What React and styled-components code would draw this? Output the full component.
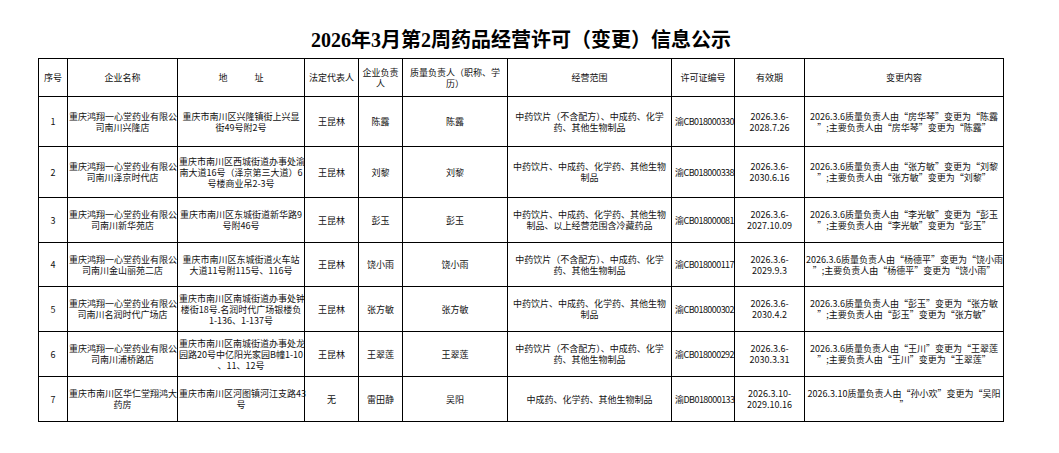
import * as React from 'react'
import styled, { createGlobalStyle } from 'styled-components'

const GlobalStyle = createGlobalStyle`
	body {
		margin: 0;
		background: #fff;
	}
`

const Page = styled.div`
	width: 966px;
	padding-left: 38px;
	font-family: "Noto Sans CJK SC", sans-serif;
	color: #111;
`

const Title = styled.h1`
	margin: 0;
	height: 58px;
	box-sizing: border-box;
	padding-top: 27px;
	font-family: "Liberation Serif", "Noto Sans CJK SC", serif;
	font-size: 20px;
	line-height: 26px;
	font-weight: bold;
	text-align: center;
	color: #000;
`

const Table = styled.table`
	width: 966px;
	border-collapse: collapse;
	table-layout: fixed;
	font-size: 9px;
	line-height: 11px;
`

const Row = styled.tr`
	height: ${(p) => p.$h}px;
`

const Cell = styled.td`
	border: 1px solid #000;
	padding: 0 1px;
	vertical-align: middle;
	text-align: center;
	white-space: nowrap;
	font-weight: normal;
`

const LicenseCell = styled(Cell)`
	text-align: left;
	padding-left: 3px;
	letter-spacing: -0.55px;
	overflow: hidden;
`

const HeadCell = styled(Cell).attrs({ as: 'th' })``

const widths = [29, 110, 127, 54, 44, 105, 164, 63, 70, 199]

const head = [
	['序号'],
	['企业名称'],
	['地　　　址'],
	['法定代表人'],
	['企业负责', '人'],
	['质量负责人（职称、学', '历）'],
	['经营范围'],
	['许可证编号'],
	['有效期'],
	['变更内容'],
]

const scopeA = ['中药饮片（不含配方）、中成药、化学', '药、其他生物制品']
const scopeB = ['中药饮片、中成药、化学药、其他生物', '制品']

const rows = [
	{
		h: 50,
		no: '1',
		name: ['重庆鸿翔一心堂药业有限公', '司南川兴隆店'],
		addr: ['重庆市南川区兴隆镇街上兴显', '街49号附2号'],
		legal: '王昆林',
		head: '陈露',
		quality: '陈露',
		scope: scopeA,
		license: '渝CB018000330',
		valid: ['2026.3.6-', '2028.7.26'],
		change: ['2026.3.6质量负责人由“房华琴”变更为“陈露', '”;主要负责人由“房华琴”变更为“陈露”'],
	},
	{
		h: 51,
		no: '2',
		name: ['重庆鸿翔一心堂药业有限公', '司南川泽京时代店'],
		addr: ['重庆市南川区西城街道办事处渝', '南大道16号（泽京第三大道）6', '号楼商业吊2-3号'],
		legal: '王昆林',
		head: '刘黎',
		quality: '刘黎',
		scope: scopeB,
		license: '渝CB018000338',
		valid: ['2026.3.6-', '2030.6.16'],
		change: ['2026.3.6质量负责人由“张方敏”变更为“刘黎', '”;主要负责人由“张方敏”变更为“刘黎”'],
	},
	{
		h: 45,
		no: '3',
		name: ['重庆鸿翔一心堂药业有限公', '司南川新华苑店'],
		addr: ['重庆市南川区东城街道新华路9', '号附46号'],
		legal: '王昆林',
		head: '彭玉',
		quality: '彭玉',
		scope: ['中药饮片、中成药、化学药、其他生物', '制品、以上经营范围含冷藏药品'],
		license: '渝CB018000081',
		valid: ['2026.3.6-', '2027.10.09'],
		change: ['2026.3.6质量负责人由“李光敏”变更为“彭玉', '”;主要负责人由“李光敏”变更为“彭玉”'],
	},
	{
		h: 44,
		no: '4',
		name: ['重庆鸿翔一心堂药业有限公', '司南川金山丽苑二店'],
		addr: ['重庆市南川区东城街道火车站', '大道11号附115号、116号'],
		legal: '王昆林',
		head: '饶小雨',
		quality: '饶小雨',
		scope: scopeA,
		license: '渝CB018000117',
		valid: ['2026.3.6-', '2029.9.3'],
		change: ['2026.3.6质量负责人由“杨德平”变更为“饶小雨', '”;主要负责人由“杨德平”变更为“饶小雨”'],
	},
	{
		h: 45,
		no: '5',
		name: ['重庆鸿翔一心堂药业有限公', '司南川名润时代广场店'],
		addr: ['重庆市南川区南城街道办事处钟', '楼街18号.名润时代广场银楼负', '1-136、1-137号'],
		legal: '王昆林',
		head: '张方敏',
		quality: '张方敏',
		scope: scopeB,
		license: '渝CB018000302',
		valid: ['2026.3.6-', '2030.4.2'],
		change: ['2026.3.6质量负责人由“彭玉”变更为“张方敏', '”;主要负责人由“彭玉”变更为“张方敏”'],
	},
	{
		h: 45,
		no: '6',
		name: ['重庆鸿翔一心堂药业有限公', '司南川浦桥路店'],
		addr: ['重庆市南川区南城街道办事处龙', '园路20号中亿阳光家园B幢1-10', '、11、12号'],
		legal: '王昆林',
		head: '王翠莲',
		quality: '王翠莲',
		scope: scopeA,
		license: '渝CB018000292',
		valid: ['2026.3.6-', '2030.3.31'],
		change: ['2026.3.6质量负责人由“王川”变更为“王翠莲', '”;主要负责人由“王川”变更为“王翠莲”'],
	},
	{
		h: 45,
		no: '7',
		name: ['重庆市南川区华仁堂翔鸿大', '药房'],
		addr: ['重庆市南川区河图镇河江支路43', '号'],
		legal: '无',
		head: '雷田静',
		quality: '吴阳',
		scope: ['中成药、化学药、其他生物制品'],
		license: '渝DB018000133',
		valid: ['2026.3.10-', '2029.10.16'],
		change: ['2026.3.10质量负责人由“孙小欢”变更为“吴阳', '”'],
	},
]

const Lines = ({ lines }) =>
	lines.map((line, i) => (
		<React.Fragment key={i}>
			{i > 0 ? <br /> : null}
			{line}
		</React.Fragment>
	))

const App = () => (
	<Page>
		<GlobalStyle />
		<Title>2026年3月第2周药品经营许可（变更）信息公示</Title>
		<Table>
			<colgroup>
				{widths.map((w, i) => (
					<col key={i} style={{ width: w }} />
				))}
			</colgroup>
			<thead>
				<Row $h={38}>
					{head.map((lines, i) => (
						<HeadCell key={i}>
							<Lines lines={lines} />
						</HeadCell>
					))}
				</Row>
			</thead>
			<tbody>
				{rows.map((r) => (
					<Row key={r.no} $h={r.h}>
						<Cell>{r.no}</Cell>
						<Cell>
							<Lines lines={r.name} />
						</Cell>
						<Cell>
							<Lines lines={r.addr} />
						</Cell>
						<Cell>{r.legal}</Cell>
						<Cell>{r.head}</Cell>
						<Cell>{r.quality}</Cell>
						<Cell>
							<Lines lines={r.scope} />
						</Cell>
						<LicenseCell>{r.license}</LicenseCell>
						<Cell>
							<Lines lines={r.valid} />
						</Cell>
						<Cell>
							<Lines lines={r.change} />
						</Cell>
					</Row>
				))}
			</tbody>
		</Table>
	</Page>
)

export default App
